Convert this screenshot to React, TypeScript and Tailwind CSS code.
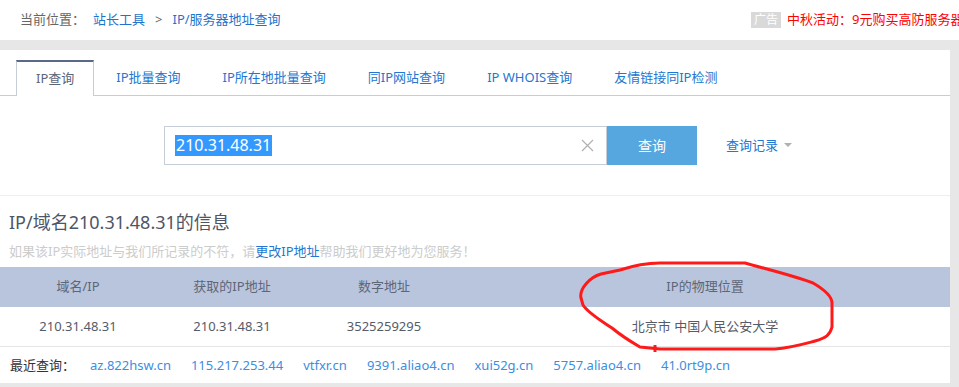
const tabs = ["IP查询", "IP批量查询", "IP所在地批量查询", "同IP网站查询", "IP WHOIS查询", "友情链接同IP检测"];

const recent = ["az.822hsw.cn", "115.217.253.44", "vtfxr.cn", "9391.aliao4.cn", "xui52g.cn", "5757.aliao4.cn", "41.0rt9p.cn"];

function TopBar() {
  return (
    <div className="h-[40px] bg-white flex items-center text-[13px]">
      <div className="flex items-center pl-5 flex-1">
        <span className="text-[#666]">当前位置：</span>
        <span className="ml-[8px] text-[#1f73c9]">站长工具</span>
        <span className="mx-[10px] text-[#666]">&gt;</span>
        <span className="text-[#1f73c9]">IP/服务器地址查询</span>
      </div>
      <div className="w-[208px] shrink-0 flex items-center whitespace-nowrap overflow-hidden">
        <span className="bg-[#d9d9d9] text-white h-[16px] px-[3px] leading-[16px] text-[12px] shrink-0">广告</span>
        <span className="ml-[6px] text-[#ff0000]">中秋活动：9元购买高防服务器</span>
      </div>
    </div>
  );
}

function Tabs() {
  return (
    <div className="pt-[10px] pl-4 flex border-b border-[#c5cdd9] text-[13px]">
      {tabs.map((t, i) =>
        i === 0 ? (
          <div key={t} className="h-[36px] -mb-px mr-[2px] flex items-center px-[19px] bg-white border-t-2 border-x border-[#c5cdd9] border-t-[#5a6985] text-[#5b6478]">
            {t}
          </div>
        ) : (
          <div key={t} className="h-[36px] -mb-px mr-[2px] flex items-center px-5 text-[#2277d0]">
            {t}
          </div>
        )
      )}
    </div>
  );
}

function Search() {
  return (
    <div className="pt-[30px] pb-[30px] pl-[6px] border-b border-[#eeeeee] flex items-center justify-center">
      <div className="w-[443px] h-[39px] border border-[#c5cdd9] flex items-center pl-[10px] pr-[12px]">
        <span className="bg-[#3399ff] text-white text-[16px] leading-[21px] px-px">210.31.48.31</span>
        <svg className="ml-auto" width="13" height="13" viewBox="0 0 13 13">
          <path d="M1 1 L12 12 M12 1 L1 12" stroke="#b0b0b0" strokeWidth="1.2" />
        </svg>
      </div>
      <div className="w-[90px] h-[39px] bg-[#56a6e0] text-white text-[14px] flex items-center justify-center">查询</div>
      <div className="ml-[29px] flex items-center text-[13px] text-[#2277d0]">
        查询记录
        <svg className="ml-[6px]" width="8" height="5" viewBox="0 0 8 5">
          <path d="M0 0 L8 0 L4 4 Z" fill="#b0b0b0" />
        </svg>
      </div>
    </div>
  );
}

function Info() {
  return (
    <div>
      <div className="pt-[12px] px-[9px]">
        <div className="text-[18px] leading-[28px] text-[#4e5566]">IP/域名210.31.48.31的信息</div>
        <div className="mt-[5px] mb-[6px] text-[13px] leading-[20px] text-[#cccccc]">
          如果该IP实际地址与我们所记录的不符，请<span className="text-[#2277d0]">更改IP地址</span>帮助我们更好地为您服务！
        </div>
      </div>
      <div className="grid grid-cols-[156px_152px_152px_1fr] h-[40px] bg-[#b9c5dc] text-[13px] text-[#5d6679] items-center text-center">
        <div>域名/IP</div>
        <div>获取的IP地址</div>
        <div>数字地址</div>
        <div>IP的物理位置</div>
      </div>
      <div className="grid grid-cols-[156px_152px_152px_1fr] h-[40px] border-b border-[#e5e5e5] text-[13px] text-[#555b68] items-center text-center">
        <div>210.31.48.31</div>
        <div>210.31.48.31</div>
        <div>3525259295</div>
        <div>北京市 中国人民公安大学</div>
      </div>
      <div className="h-[36px] flex items-center pl-[10px] pt-[1px]">
        <span className="w-[80px] text-[13px] text-[#333]">最近查询：</span>
        <div className="flex gap-[20px] text-[13px] text-[#3b8ee0]">
          {recent.map((r) => (
            <span key={r}>{r}</span>
          ))}
        </div>
      </div>
    </div>
  );
}

export default function App() {
  return (
    <div className="relative w-[959px] h-[387px] bg-[#e7e7e7] overflow-hidden font-['Noto_Sans','Noto_Sans_CJK_SC',sans-serif]">
      <TopBar />
      <div className="mt-[10px] mr-[9px] h-[333px] bg-white">
        <Tabs />
        <Search />
        <Info />
      </div>
      <svg className="absolute left-0 top-0 pointer-events-none" width="959" height="387" viewBox="0 0 959 387">
        <path
          d="M581,298 C579,289 590,277 601,274 L620,270 C638,264 650,263 660,263 L745,263 C770,270 795,276 813,283 C825,290 832,296 832,303 L832,327 C830,335 826,338 815,341 C800,345 790,348 775,349 L660,349 L640,347 C628,340 618,333 612,328 C600,320 588,313 583,305 Z"
          fill="none"
          stroke="#ff1a1a"
          strokeWidth="3"
          strokeLinejoin="round"
        />
        <path d="M655,345 L655,352" stroke="#ff1a1a" strokeWidth="3" />
      </svg>
    </div>
  );
}
